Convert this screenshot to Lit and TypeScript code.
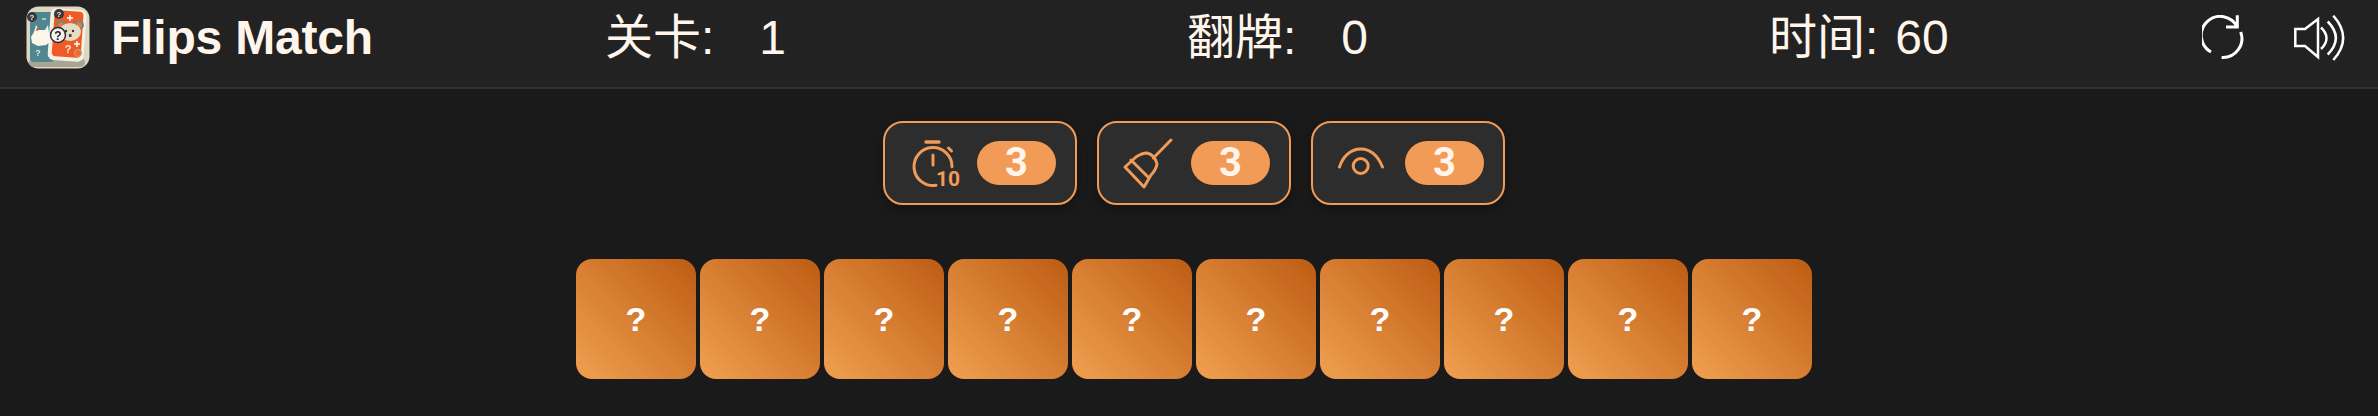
import { LitElement, html, css, svg } from "lit";
import { customElement } from "lit/decorators.js";

const logo = svg`<svg class="logo" viewBox="0 0 64 64" width="64" height="64" font-family="Liberation Sans" font-weight="700">
  <rect x="0.500" y="0.500" width="63" height="62" rx="12" fill="#ddd8c4"/>
  <rect x="3" y="52" width="56" height="9" rx="5" fill="#a9a596"/>
  <rect x="4" y="6" width="24" height="50" rx="4" fill="#4f8690"/>
  <rect x="23" y="3" width="36" height="52" rx="6" fill="#f3f1e2" transform="rotate(4 41 30)"/>
  <rect x="27" y="5" width="29" height="46" rx="4" fill="#ef5a26" transform="rotate(4 41 30)"/>
  <circle cx="6" cy="11" r="5" fill="#3a3838"/><text x="6" y="14" font-size="8" text-anchor="middle" fill="#eee">?</text>
  <circle cx="33" cy="8" r="5" fill="#3a3838"/><text x="33" y="11" font-size="8" text-anchor="middle" fill="#eee">?</text>
  <rect x="16" y="12" width="4" height="2" fill="#8fd0c0"/>
  <path d="M44 9v6M41 12h6" stroke="#fff" stroke-width="1.500"/>
  <path d="M51 35v6M48 38h6" stroke="#fff" stroke-width="1.500"/>
  <circle cx="35" cy="19" r="5" fill="#8a8170"/><circle cx="53" cy="19" r="5" fill="#8a8170"/>
  <circle cx="35" cy="19" r="2.500" fill="#ef7a3a"/><circle cx="53" cy="19" r="2.500" fill="#ef7a3a"/>
  <ellipse cx="44" cy="26" rx="11" ry="9" fill="#e6dcc4"/>
  <circle cx="40" cy="25" r="1.200" fill="#333"/><circle cx="47" cy="25" r="1.200" fill="#333"/>
  <path d="M43 28h2.500v3h-2.500z" fill="#444"/>
  <path d="M10 19l3 5 6 0 3-5 1 8 3 4-2 5-4 3-8 1-6-3-1-6 3-5z" fill="#fbf6e8"/>
  <path d="M11 21l2 3-3 1z" fill="#d9442f"/>
  <circle cx="32" cy="29" r="7.500" fill="#f4f4ee" stroke="#2a2a33" stroke-width="1.500"/>
  <text x="32" y="33.500" font-size="12" text-anchor="middle" fill="#222">?</text>
  <text x="42" y="47" font-size="11" text-anchor="middle" fill="#f6eee0">?</text>
  <text x="12" y="50" font-size="9" text-anchor="middle" fill="#e8e4d4">?</text>
  <circle cx="52" cy="47" r="3.500" fill="#ee6a2a" stroke="#c9a27a"/>
</svg>`;

const refreshIcon = svg`<svg viewBox="0 0 42 46" width="42" height="46" fill="none" stroke="#fff" stroke-width="3">
  <path d="M9 37A19 19 0 1 1 35.300 12"/>
  <path d="M19.600 42.500A19 19 0 0 0 38.700 17"/>
  <path d="M24 12h11.300V0.300"/>
</svg>`;

const soundIcon = svg`<svg viewBox="0 0 51 46" width="51" height="46" fill="none" stroke="#fff" stroke-width="2.500">
  <path d="M1.300 14H11L24 4v38L11 31H1.300z"/>
  <path d="M27 12.500Q38 23 27 34"/>
  <path d="M33.700 6.500Q50 23 33.700 39.500"/>
  <path d="M39.300 0.700Q59 23 39.300 45"/>
</svg>`;

const timerIcon = svg`<svg class="tool" viewBox="0 0 50 54" width="50" height="54" fill="none" stroke="#f29b56" stroke-width="3" stroke-linecap="round">
  <path d="M15 6h13" stroke-width="3.500"/>
  <path d="M22 19v10"/>
  <path d="M37.500 12l3 3"/>
  <path d="M41 30.700A19 19 0 1 0 25 49.300"/>
  <text x="25" y="50" font-family="Roboto" font-weight="700" font-size="21" fill="#f29b56" stroke="none">10</text>
</svg>`;

const broomIcon = svg`<svg class="tool" viewBox="0 0 50 54" width="50" height="54" fill="none" stroke="#f29b56" stroke-width="3" stroke-linecap="round" stroke-linejoin="round">
  <path d="M46 4L28.300 22"/>
  <path d="M0 31L11 21Q17 17 22 17Q30 19 32 28Q31 34 26 39L19 51Z"/>
  <path d="M6 24L23 41"/>
</svg>`;

const eyeIcon = svg`<svg class="tool" viewBox="0 0 50 54" width="50" height="54" fill="none" stroke="#f29b56" stroke-width="3" stroke-linecap="round">
  <path d="M0.500 31C4 20 12 13 21.700 13S39 20 43.500 31"/>
  <circle cx="21.700" cy="30" r="7.500"/>
</svg>`;

@customElement("app-root")
export class AppRoot extends LitElement {
  static styles = css`
    :host { display: block; min-height: 416px; background: #1a1a1a; font-family: "Liberation Sans", "Noto Sans CJK SC", sans-serif; color: #fff5eb; }
    .header { height: 87px; box-sizing: border-box; background: #222222; display: flex; align-items: center; padding: 0 33px 12px 26px; }
    .rule { height: 2px; background: #303030; }
    .brand { display: flex; align-items: center; gap: 21px; width: 579px; flex: none; }
    .logo { display: block; filter: blur(0.4px); }
    .title { font-size: 48px; font-weight: 700; line-height: 1; letter-spacing: -0.2px; }
    .stat { width: 582px; flex: none; font-size: 48px; line-height: 1; white-space: pre; display: flex; }
    .stat.last { width: auto; }
    .val { margin-left: 45px; }
    .val.near { margin-left: 17px; }
    .actions { display: flex; align-items: center; gap: 50px; margin-left: auto; flex: none; }
    .actions svg { display: block; }
    .powers { display: flex; justify-content: center; gap: 20px; padding: 32px 0 0 10px; }
    .power { box-sizing: border-box; width: 194px; height: 84px; border: 2px solid #f29b56; border-radius: 20px; background: #2d2d2d; display: flex; align-items: center; padding-left: 26px; gap: 16px; box-shadow: 0 4px 12px rgba(0,0,0,.3); }
    .ic { width: 50px; height: 54px; flex: none; }
    .tool { display: block; overflow: visible; }
    .pill { width: 79px; height: 44px; border-radius: 22px; background: #f29b56; color: #fff5eb; font-family: Roboto, sans-serif; font-weight: 700; font-size: 40px; display: flex; align-items: center; justify-content: center; line-height: 1; }
    .cards { display: flex; justify-content: center; gap: 4px; padding: 54px 0 0 10px; }
    .card { width: 120px; height: 120px; border-radius: 16px; background: linear-gradient(45deg, #f0a050, #bd5c14); display: flex; align-items: center; justify-content: center; color: #fff; font-size: 34px; font-weight: 700; }
  `;

  render() {
    return html`
      <div class="header">
        <div class="brand">${logo}<div class="title">Flips Match</div></div>
        <div class="stat"><span>关卡:</span><span class="val">1</span></div>
        <div class="stat"><span>翻牌:</span><span class="val">0</span></div>
        <div class="stat last"><span>时间:</span><span class="val near">60</span></div>
        <div class="actions">${refreshIcon}${soundIcon}</div>
      </div>
      <div class="rule"></div>
      <div class="powers">
        <div class="power"><span class="ic">${timerIcon}</span><span class="pill">3</span></div>
        <div class="power"><span class="ic">${broomIcon}</span><span class="pill">3</span></div>
        <div class="power"><span class="ic">${eyeIcon}</span><span class="pill">3</span></div>
      </div>
      <div class="cards">
        ${Array.from({ length: 10 }, () => html`<div class="card">?</div>`)}
      </div>
    `;
  }
}
